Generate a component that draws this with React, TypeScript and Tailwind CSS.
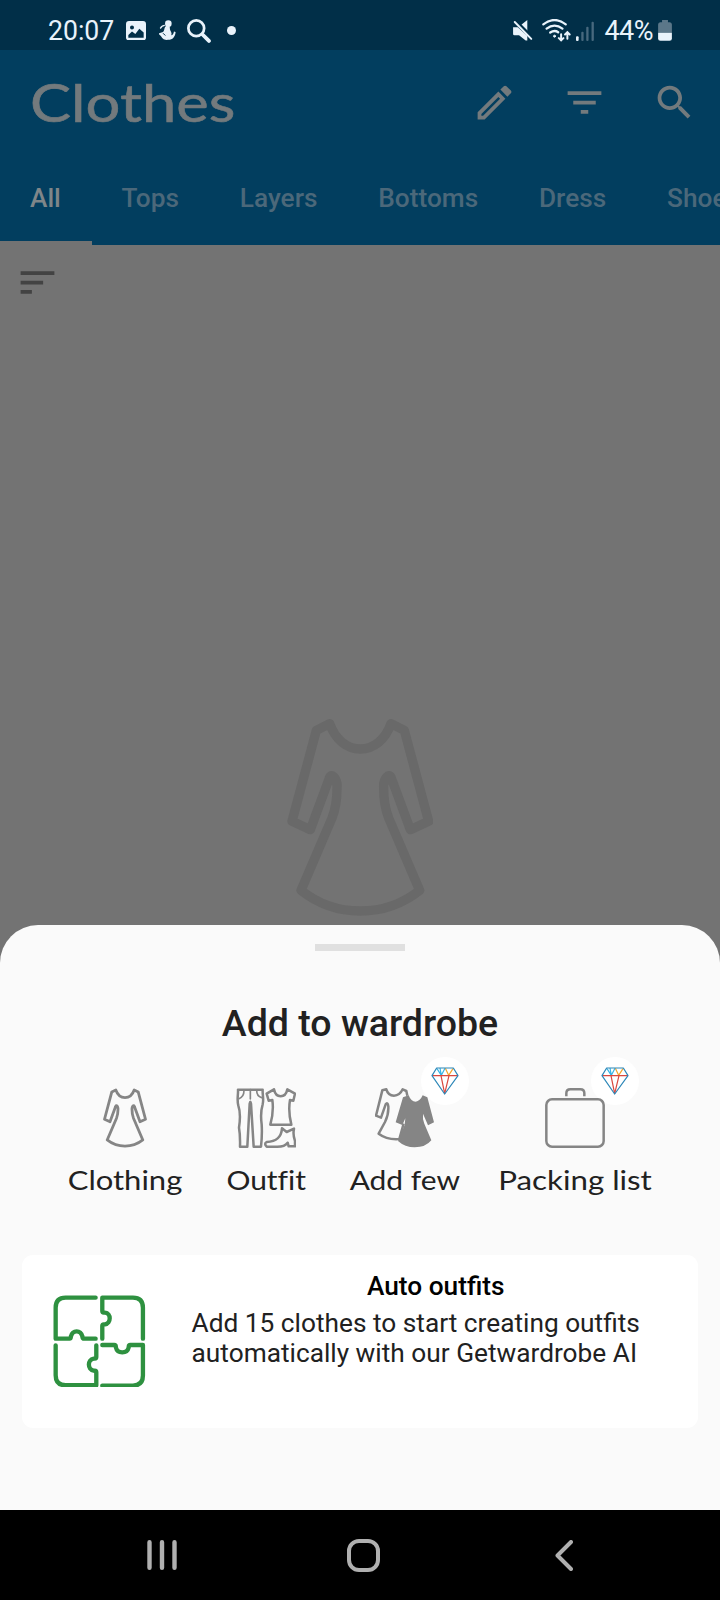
import React from "react";

const DRESS =
  "M208 72 L168 92 L95 365 L150 390 L206 238 C212 215 232 235 230 265 C230 300 225 330 215 355 L122 572 Q200 634 300 634 Q400 634 478 572 L385 355 C375 330 370 300 370 265 C368 235 388 215 394 238 L450 390 L505 365 L432 92 L392 72 C375 120 340 148 300 148 C260 148 225 120 208 72Z";

function Dress({ className }: { className: string }) {
  return (
    <svg viewBox="80 55 440 595" className={className} fill="none" stroke="currentColor" strokeWidth="28" strokeLinejoin="round">
      <path d={DRESS} />
    </svg>
  );
}

function MaterialIcon({ d }: { d: string }) {
  return (
    <svg viewBox="0 0 24 24" className="size-[45px] shrink-0" fill="currentColor">
      <path d={d} />
    </svg>
  );
}

function StatusBar() {
  return (
    <div className="flex h-[50px] shrink-0 items-center bg-[#012f48] pl-[48px] pr-[48px] pt-[11px] text-[#e9f3fb]">
      <span className="w-[66px] origin-left scale-x-[0.985] text-[27px] leading-[38px]">20:07</span>
      <svg viewBox="0 0 60 58" className="ml-[12px] h-[19.5px] w-[20px]">
        <path fill="currentColor" fillRule="evenodd" d="M9 0H51Q60 0 60 9V50Q60 58 51 58H9Q0 58 0 50V9Q0 0 9 0ZM18 13A6 6 0 1 0 18 25A6 6 0 1 0 18 13ZM7 42V50H53V34L40 23L28 39L18 31Z" />
      </svg>
      <svg viewBox="0 0 54 62" className="ml-[12px] h-[20.5px] w-[18px]" fill="currentColor">
        <circle cx="31" cy="11" r="10" />
        <path d="M24 18C17 23 21 31 15 36L3 40C1 44 7 46 9 49C14 60 24 61 31 60C44 60 52 50 53 36L48 35C47 42 44 46 40 46C43 39 37 34 36 29L35 19Z" />
        <path d="M5 24Q11 14 21 14L20 18Q13 18 8 27Z" />
        <path d="M15 40L22 47" stroke="#012f48" strokeWidth="3" />
      </svg>
      <svg viewBox="0 0 70 70" className="ml-[10.5px] size-[24px]" fill="none" stroke="currentColor" strokeLinecap="round">
        <circle cx="27" cy="27" r="23" strokeWidth="8" />
        <path d="M46 46L64 64" strokeWidth="11" />
      </svg>
      <span className="ml-[16.5px] size-[8.5px] rounded-full bg-current" />
      <div className="ml-auto flex items-center">
        <svg viewBox="0 0 60 62" className="h-[20.5px] w-[20px]" fill="currentColor">
          <path d="M24 15L43 0V33ZM0 22H14L43 48V62H38L18 46H4Q0 46 0 42Z" />
          <path d="M5 6L55 57" stroke="currentColor" strokeWidth="6" strokeLinecap="round" />
          <path d="M9 0L60 51" stroke="#012f48" strokeWidth="4" />
        </svg>
        <svg viewBox="0 0 88 68" className="ml-[9px] h-[22.5px] w-[29px]" fill="none" stroke="currentColor" strokeWidth="7" strokeLinecap="round">
          <path d="M4 16Q38 -10 72 16M14 29Q38 11 62 29M25 41Q38 32 49 40" />
          <circle cx="38" cy="52" r="3" fill="currentColor" strokeWidth="3" />
          <path strokeWidth="6" d="M58 46V64M51 58L58 65L65 58M77 60V41M70 47L77 40L84 47" />
        </svg>
        <svg viewBox="0 0 56 60" className="ml-[5px] mr-[1px] h-[20px] w-[18.5px] text-[#48697e]" fill="currentColor">
          <rect x="0" y="46" width="8" height="14" rx="3" className="fill-[#e9f3fb]" />
          <rect x="16" y="32" width="7" height="28" rx="3" />
          <rect x="31" y="17" width="7" height="43" rx="3" />
          <rect x="47" y="2" width="7" height="58" rx="3" />
        </svg>
        <span className="ml-[9.5px] w-[50px] whitespace-nowrap text-[27px] leading-[38px] tracking-[-0.6px]">44%</span>
        <svg viewBox="0 0 42 64" className="ml-[3.5px] h-[21px] w-[14px]">
          <path d="M12 0H30V7H36Q42 8 42 14V39H0V14Q0 8 6 7H12Z" className="fill-[#5b7789]" />
          <path d="M0 39H42V56Q42 63 35 63H7Q0 63 0 56Z" fill="currentColor" />
        </svg>
      </div>
    </div>
  );
}

function Diamond() {
  return (
    <svg viewBox="0 0 84 84" className="size-[28px]" fill="none" strokeWidth="3.6" strokeLinejoin="round">
      <path d="M27 3L31 25M42 4L31 25L18 5" stroke="#35b4e6" />
      <path d="M43 4L53 25L66 5" stroke="#f5a52a" />
      <path d="M3 26H81M30 26L41 80L54 26" stroke="#d9483f" />
      <path d="M17 3H67L81 26L41 81L3 26Z" stroke="#2d87b8" />
    </svg>
  );
}

function Badge() {
  return (
    <span className="absolute -top-[31px] left-[46px] flex size-[48px] items-center justify-center rounded-full bg-white">
      <Diamond />
    </span>
  );
}

function OutfitIcon() {
  return (
    <svg viewBox="528 85 180 180" className="size-[60px]" fill="none" stroke="currentColor" strokeWidth="7.5" strokeLinejoin="round" strokeLinecap="round">
      <path d="M534 90H608C607 106 612 118 608 134C602 154 602 172 605 194Q607 226 603 261H581L573 132Q571 120 569 132L562 261H540Q541 226 537 204C541 178 542 158 535 138C530 118 535 106 534 90Z" />
      <path d="M571 90V118M552 92Q552 112 537 117M590 92Q590 110 605 114" strokeWidth="5" />
      <path d="M642 89L620 102L626 123L637 121Q642 155 631 195H694Q684 155 690 121L700 123L705 102L682 89Q678 110 662 110Q646 110 642 89Z" />
      <path d="M666 206L680 217L702 207Q698 225 705 244V260H686L683 249Q674 261 652 261H620Q611 252 620 247C646 245 664 236 666 206Z" />
    </svg>
  );
}

function AddFewIcon() {
  return (
    <svg viewBox="104 115 180 180" className="size-[60px]" fill="none" stroke="currentColor" strokeWidth="7.5" strokeLinejoin="round">
      <path d="M201 138L198 124L187 119Q178 138 161 138Q143 137 138 119L126 122L107 198L122 204L136 164Q142 156 144 170C145 190 140 205 134 217L115 252Q140 271 177 268L190 222" />
      <path fill="currentColor" stroke="none" d="M205 137Q212 156 226 156Q239 155 247 137L261 143L281 218L263 227L248 192Q246 206 252 222L273 272Q256 293 223 293Q194 293 173 274L193 226L195 206L186 226L166 218L188 143Z" />
    </svg>
  );
}

function CaseIcon() {
  return (
    <svg viewBox="614 115 180 180" className="size-[60px]" fill="none" stroke="currentColor" strokeWidth="7.5">
      <rect x="618" y="149" width="172" height="142" rx="17" />
      <path d="M678 140V131Q678 119 690 119H720Q732 119 732 131V140" />
    </svg>
  );
}

function Option({ width, label, scale, icon, badge }: { width: string; label: string; scale: string; icon: React.ReactNode; badge?: boolean }) {
  return (
    <div className={`flex flex-col items-center ${width}`}>
      <div className="relative flex h-[60px] w-[60px] justify-center text-[#858585]">
        {badge && <Badge />}
        <div className="relative">{icon}</div>
      </div>
      <span
        className={`mt-[14px] whitespace-nowrap font-[Lato,sans-serif] text-[26.5px] leading-[36px] [font-variant-ligatures:none] ${scale}`}
      >
        {label}
      </span>
    </div>
  );
}

function PuzzleIcon() {
  return (
    <svg viewBox="160 163 278 278" className="size-[92.6px] shrink-0 text-[#2e9140]" fill="none" stroke="currentColor" strokeWidth="13" strokeLinecap="round" strokeLinejoin="round">
      <path d="M288 171H198Q168 171 168 201V294H210C214 294 213 290 214 287C219 267 243 267 248 287C249 290 248 294 253 294H288" />
      <path d="M308 294V256C308 250 312 252 316 251C335 248 335 218 316 216C312 215 308 217 308 211V171H400Q430 171 430 201V294" />
      <path d="M168 314V404Q168 434 198 434H290V395C290 389 286 391 282 390C263 387 263 357 282 354C286 353 290 355 290 349V314" />
      <path d="M308 313H344C350 313 348 317 349 321C353 340 383 340 387 321C388 317 386 313 392 313H430V405Q430 435 400 435H308" />
    </svg>
  );
}

const tabs = ["All", "Tops", "Layers", "Bottoms", "Dress", "Shoes"];

export default function App() {
  return (
    <div className="flex h-[1600px] w-[720px] flex-col overflow-hidden bg-[#737373] font-[Roboto,sans-serif]">
      <StatusBar />
      <header className="flex h-[195px] shrink-0 flex-col bg-[#023e5f]">
        <div className="flex h-[105px] items-center pl-[29.5px] pr-[22.6px] text-[#737a7d]">
          <h1 className="-mt-[1.5px] origin-left scale-x-[1.16] font-[Lato,sans-serif] text-[53px] leading-[60px] [-webkit-text-stroke:0.6px]">Clothes</h1>
          <div className="ml-auto flex gap-[45px]">
            <MaterialIcon d="M14.06 9.02l.92.92L5.92 19H5v-.92l9.06-9.06M17.66 3c-.25 0-.51.1-.7.29l-1.83 1.83 3.75 3.75 1.83-1.83c.39-.39.39-1.02 0-1.41l-2.34-2.34c-.2-.2-.45-.29-.71-.29zm-3.6 3.19L3 17.25V21h3.75L17.81 9.94l-3.75-3.75z" />
            <MaterialIcon d="M10 18h4v-2h-4v2zM3 6v2h18V6H3zm3 7h12v-2H6v2z" />
            <MaterialIcon d="M15.5 14h-.79l-.28-.27C15.41 12.59 16 11.11 16 9.5 16 5.91 13.09 3 9.5 3S3 5.91 3 9.5 5.91 16 9.5 16c1.61 0 3.09-.59 4.23-1.57l.27.28v.79l5 4.99L20.49 19l-4.99-5zm-6 0C7.01 14 5 11.99 5 9.5S7.01 5 9.5 5 14 7.01 14 9.5 11.99 14 9.5 14z" />
          </div>
        </div>
        <nav className="flex h-[90px] overflow-hidden">
          {tabs.map((t, i) => (
            <div
              key={t}
              className={`flex shrink-0 items-center border-b-4 pl-[30px] pr-[30.8px] pt-[2px] text-[26.25px] font-medium ${i === 0 ? "border-[#737373] text-[#7f8689]" : "border-transparent text-[#4b687a]"}`}
            >
              {t}
            </div>
          ))}
        </nav>
      </header>
      <main className="flex h-[680px] shrink-0 flex-col pt-[15px]">
        <svg viewBox="0 0 24 24" className="ml-[15px] size-[45px] fill-[#434343]">
          <path d="M3 18h6v-2H3v2zM3 6v2h18V6H3zm0 7h12v-2H3v2z" />
        </svg>
        <Dress className="mt-[413.3px] h-[198.3px] w-[146.7px] self-center text-[#696969]" />
      </main>
      <section className="flex h-[585px] shrink-0 flex-col rounded-t-[38px] bg-[#fafafa] text-[#212121]">
        <div className="mt-[19px] h-[7px] w-[90px] self-center bg-[#e0e0e0]" />
        <h2 className="mt-[50px] h-[44px] self-center text-[37.5px] font-medium leading-[44px]">Add to wardrobe</h2>
        <div className="mt-[43.3px] flex pl-[45px]">
          <Option width="w-[160px]" scale="scale-x-[1.17]" label="Clothing" icon={<Dress className="h-[60px] w-[44px]" />} />
          <Option width="w-[122px]" scale="scale-x-[1.13]" label="Outfit" icon={<OutfitIcon />} />
          <Option width="w-[155px]" scale="scale-x-[1.13]" label="Add few" icon={<AddFewIcon />} badge />
          <Option width="w-[186px]" scale="scale-x-[1.18]" label="Packing list" icon={<CaseIcon />} badge />
        </div>
        <div className="mx-[22px] mt-[57px] flex h-[172.5px] rounded-[11px] bg-white pl-[31.3px] pr-[18px]">
          <div className="mt-[39.5px]">
            <PuzzleIcon />
          </div>
          <div className="ml-[45.7px] flex flex-1 flex-col pt-[16px]">
            <h3 className="text-center text-[26.25px] font-medium leading-[30px] text-black">Auto outfits</h3>
            <p className="mt-[7px] whitespace-nowrap text-[26.25px] leading-[30px]">
              Add 15 clothes to start creating outfits
              <br />
              automatically with our Getwardrobe AI
            </p>
          </div>
        </div>
      </section>
      <footer className="flex h-[90px] shrink-0 items-center bg-black text-[#b0b0b0]">
        <svg viewBox="0 0 30 30" className="ml-[147px] size-[30px]" fill="none" stroke="currentColor" strokeWidth="4.4" strokeLinecap="round">
          <path d="M2.5 2.2V27.8M15 2.2V27.8M27.5 2.2V27.8" />
        </svg>
        <svg viewBox="0 0 33 33" className="ml-[169.5px] size-[33px]" fill="none" stroke="currentColor" strokeWidth="4">
          <rect x="2" y="2" width="29" height="29" rx="10" />
        </svg>
        <svg viewBox="0 0 18 31" className="ml-[175px] h-[31px] w-[18px]" fill="none" stroke="currentColor" strokeWidth="4" strokeLinecap="round" strokeLinejoin="round">
          <path d="M16 2L2.5 15.5L16 29" />
        </svg>
      </footer>
    </div>
  );
}
